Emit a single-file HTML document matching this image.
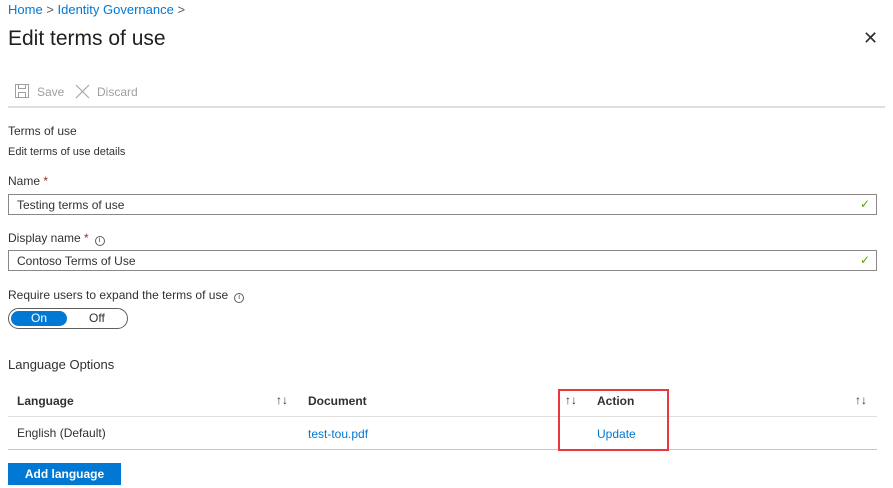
<!DOCTYPE html>
<html><head><meta charset="utf-8"><style>
*{margin:0;padding:0;box-sizing:border-box}
body{width:893px;height:488px;background:#fff;font-family:"Liberation Sans",sans-serif;color:#323130;position:relative;overflow:hidden;font-size:12px}
.a{position:absolute;white-space:nowrap}
.link{color:#0078d4}
.inp{position:absolute;left:8px;width:869px;height:21px;border:1px solid #8a8886;font-size:12px;padding:3px 8px}
.chk{position:absolute;right:6px;top:2px;color:#57a300;font-size:12px}
.hl{position:absolute;left:8px;width:869px;height:1px;background:#e1dfdd}
.info{display:inline-block;width:10px;height:10px;border:1px solid #605e5c;border-radius:50%;font-size:7px;text-align:center;line-height:8px;margin-left:6px;vertical-align:0}
</style></head><body>
<div class="a link" style="left:8px;top:2px;font-size:13px">Home <span style="color:#605e5c">&gt;</span> Identity Governance <span style="color:#605e5c">&gt;</span></div>
<div class="a" style="left:8px;top:27px;font-size:21px;color:#201f1e">Edit terms of use</div>
<div class="a" style="left:863px;top:28px;font-size:18px;color:#323130">✕</div>
<svg class="a" style="left:15px;top:84px" width="14" height="14" viewBox="0 0 14 14"><rect x="0.5" y="0.5" width="13" height="13" fill="none" stroke="#a19f9d"/><rect x="3.5" y="0.5" width="7" height="4" fill="none" stroke="#a19f9d"/><rect x="3.5" y="8.5" width="7" height="5" fill="none" stroke="#a19f9d"/></svg>
<div class="a" style="left:37px;top:85px;color:#a19f9d">Save</div>
<svg class="a" style="left:75px;top:84px" width="15" height="15" viewBox="0 0 15 15"><path d="M1 1L14 14M14 1L1 14" stroke="#a19f9d"/></svg>
<div class="a" style="left:97px;top:85px;color:#a19f9d">Discard</div>
<div class="a" style="left:8px;top:106px;width:877px;height:2px;background:#e1dfdd"></div>
<div class="a" style="left:8px;top:124px;font-size:12px">Terms of use</div>
<div class="a" style="left:8px;top:146px;font-size:11px">Edit terms of use details</div>
<div class="a" style="left:8px;top:174px">Name <span style="color:#a4262c">*</span></div>
<div class="inp" style="top:194px">Testing terms of use<span class="chk">✓</span></div>
<div class="a" style="left:8px;top:231px">Display name <span style="color:#a4262c">*</span><span class="info">i</span></div>
<div class="inp" style="top:250px">Contoso Terms of Use<span class="chk">✓</span></div>
<div class="a" style="left:8px;top:288px">Require users to expand the terms of use<span class="info">i</span></div>
<div class="a" style="left:8px;top:308px;width:120px;height:21px;border:1px solid #605e5c;border-radius:11px"></div>
<div class="a" style="left:11px;top:311px;width:56px;height:15px;background:#0078d4;border-radius:8px;color:#fff;text-align:center;line-height:15px">On</div>
<div class="a" style="left:89px;top:311px;line-height:15px">Off</div>
<div class="a" style="left:8px;top:357px;font-size:13px">Language Options</div>
<div class="a" style="left:17px;top:394px;font-weight:bold;color:#323130">Language</div>
<div class="a" style="left:276px;top:393px;font-size:12px">↑↓</div>
<div class="a" style="left:308px;top:394px;font-weight:bold">Document</div>
<div class="a" style="left:565px;top:393px;font-size:12px">↑↓</div>
<div class="a" style="left:597px;top:394px;font-weight:bold">Action</div>
<div class="a" style="left:855px;top:393px;font-size:12px">↑↓</div>
<div class="hl" style="top:416px"></div>
<div class="a" style="left:17px;top:426px">English (Default)</div>
<div class="a link" style="left:308px;top:427px">test-tou.pdf</div>
<div class="a link" style="left:597px;top:427px">Update</div>
<div class="hl" style="top:449px;background:#c8c6c4"></div>
<div class="a" style="left:558px;top:389px;width:111px;height:62px;border:2px solid #e8383d"></div>
<div class="a" style="left:8px;top:463px;width:113px;height:22px;background:#0078d4;color:#fff;font-weight:bold;text-align:center;line-height:22px">Add language</div>
</body></html>
